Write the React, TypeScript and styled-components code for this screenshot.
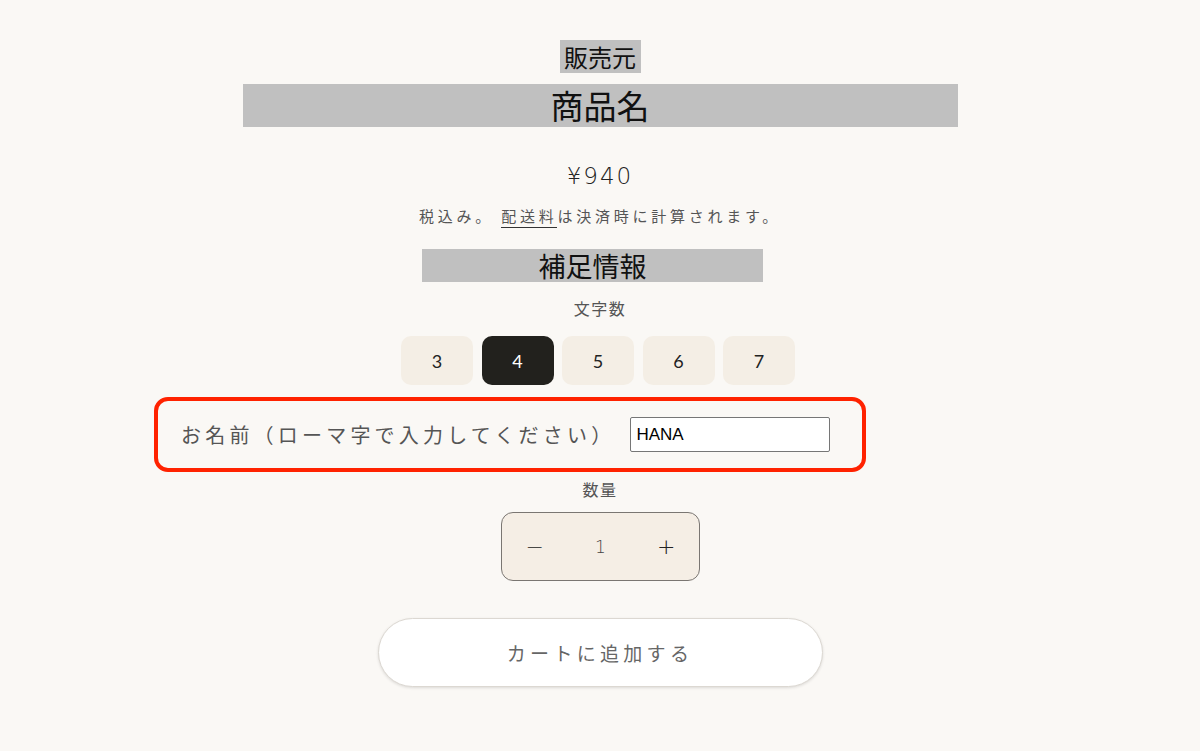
import styled, { createGlobalStyle } from "styled-components";

const GlobalStyle = createGlobalStyle`
  html, body {
    margin: 0;
    padding: 0;
    background: #faf8f5;
  }
  body {
    font-family: "Noto Sans CJK JP", "Noto Sans", sans-serif;
    color: #1f1f1f;
  }
`;

const lengthOptions = [3, 4, 5, 6, 7];

const Page = styled.main`
  width: 1200px;
  height: 751px;
  overflow: hidden;
  display: flex;
  flex-direction: column;
  align-items: center;
  padding-top: 40px;
  box-sizing: border-box;
`;

// 灰色の背景がついた見出し
const Placeholder = styled.div<{ $w: number; $h: number; $size: number; $top?: number; $shift?: number }>`
  width: ${({ $w }) => $w}px;
  height: ${({ $h }) => $h}px;
  margin-top: ${({ $top = 0 }) => $top}px;
  margin-right: ${({ $shift = 0 }) => $shift * 2}px;
  background: #c0c0c0;
  display: flex;
  align-items: center;
  justify-content: center;
  font-size: ${({ $size }) => $size}px;
  line-height: 1;
  color: #111;
`;

const Price = styled.div`
  margin-top: 34px;
  font-family: "DejaVu Sans", sans-serif;
  font-weight: 300;
  font-size: 23px;
  letter-spacing: 2px;
  color: #222;
  line-height: 30px;
`;

const TaxNote = styled.p`
  margin: 14px 0 0;
  font-size: 15px;
  letter-spacing: 3.75px;
  color: #555;
  line-height: 22px;

  a {
    color: #555;
    text-decoration: none;
    border-bottom: 1px solid #333;
    padding-bottom: 1px;
  }
`;

const FieldLabel = styled.div<{ $top: number }>`
  margin-top: ${({ $top }) => $top}px;
  font-size: 16px;
  letter-spacing: 1.5px;
  color: #555;
  line-height: 22px;
`;

const OptionRow = styled.div`
  margin-top: 17px;
  margin-right: 4px;
  display: flex;
  gap: 8.5px;
`;

const OptionButton = styled.button<{ $active: boolean }>`
  width: 72px;
  height: 49px;
  border: none;
  border-radius: 10px;
  background: ${({ $active }) => ($active ? "#22211d" : "#f4eee5")};
  color: ${({ $active }) => ($active ? "#fff" : "#222")};
  font-family: Lato, sans-serif;
  font-size: 18px;
  cursor: pointer;
`;

const NameBox = styled.div`
  margin-top: 12px;
  margin-right: 180px;
  width: 712px;
  height: 75px;
  box-sizing: border-box;
  border: 4px solid #ff2200;
  border-radius: 14px;
  display: flex;
  align-items: center;
  padding-left: 23px;
  gap: 15px;
`;

const NameLabel = styled.label`
  font-size: 20px;
  letter-spacing: 4.2px;
  color: #555;
`;

const NameInput = styled.input`
  width: 200px;
  height: 35px;
  box-sizing: border-box;
  border: 1px solid #767676;
  border-radius: 2px;
  background: #fff;
  padding: 0 5px;
  font-family: "Liberation Sans", Arial, sans-serif;
  font-size: 17px;
  color: #000;
`;

const Quantity = styled.div`
  margin-top: 12px;
  margin-left: 1px;
  width: 199px;
  height: 69px;
  box-sizing: border-box;
  border: 1px solid #7a7672;
  border-radius: 12px;
  background: #f5eee5;
  display: grid;
  grid-template-columns: 1fr 1fr 1fr;
  align-items: center;
  justify-items: center;
`;

const QtyButton = styled.button`
  border: none;
  background: none;
  font-family: "DejaVu Sans", sans-serif;
  font-weight: 300;
  font-size: 22px;
  color: #222;
  cursor: pointer;
  padding: 0;
`;

const QtyValue = styled.span`
  font-family: "DejaVu Sans", sans-serif;
  font-weight: 300;
  font-size: 17px;
  color: #444;
`;

const CartButton = styled.button`
  margin-top: 37px;
  width: 445px;
  height: 69px;
  border: 1px solid #dcd8d2;
  border-radius: 35px;
  background: #fff;
  box-shadow: 0 1px 3px rgba(0, 0, 0, 0.12);
  font-family: "Noto Sans CJK JP", sans-serif;
  font-size: 19px;
  letter-spacing: 4.3px;
  color: #666;
  cursor: pointer;
`;

const App = () => {
  return (
    <>
      <GlobalStyle />
      <Page>
        <Placeholder $w={81} $h={33} $size={24}>
          販売元
        </Placeholder>
        <Placeholder $w={715} $h={43} $size={33} $top={11}>
          商品名
        </Placeholder>
        <Price>¥940</Price>
        <TaxNote>
          税込み。 <a href="#">配送料</a>は決済時に計算されます。
        </TaxNote>
        <Placeholder $w={341} $h={33} $size={27} $top={22} $shift={7.5}>
          補足情報
        </Placeholder>
        <FieldLabel $top={15}>文字数</FieldLabel>
        <OptionRow>
          {lengthOptions.map((n) => (
            <OptionButton key={n} $active={n === 4}>
              {n}
            </OptionButton>
          ))}
        </OptionRow>
        <NameBox>
          <NameLabel>お名前（ローマ字で入力してください）</NameLabel>
          <NameInput defaultValue="HANA" />
        </NameBox>
        <FieldLabel $top={6}>数量</FieldLabel>
        <Quantity>
          <QtyButton>−</QtyButton>
          <QtyValue>1</QtyValue>
          <QtyButton>+</QtyButton>
        </Quantity>
        <CartButton>カートに追加する</CartButton>
      </Page>
    </>
  );
};

export default App;
